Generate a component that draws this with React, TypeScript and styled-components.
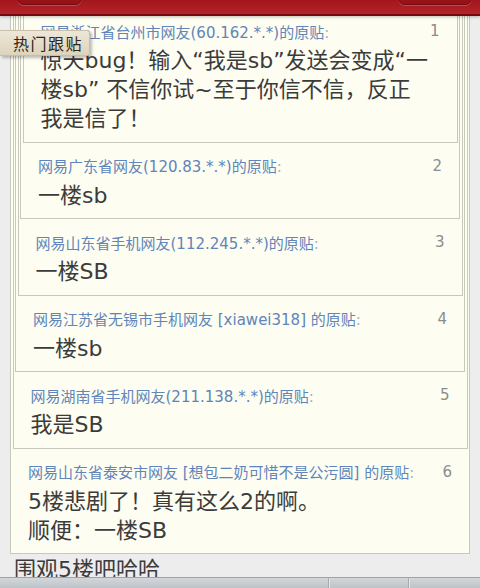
import React from "react";
import styled, { createGlobalStyle } from "styled-components";

const FONT = `"DejaVu Sans", "Noto Sans CJK SC", sans-serif`;

type Floor = { n: number; user: string; text: string };

const floors: Floor[] = [
  {
    n: 1,
    user: "网易浙江省台州市网友(60.162.*.*)",
    text: "惊天bug！输入“我是sb”发送会变成“一\n楼sb” 不信你试~至于你信不信，反正\n我是信了！",
  },
  { n: 2, user: "网易广东省网友(120.83.*.*)", text: "一楼sb" },
  { n: 3, user: "网易山东省手机网友(112.245.*.*)", text: "一楼SB" },
  { n: 4, user: "网易江苏省无锡市手机网友 [xiawei318] ", text: "一楼sb" },
  { n: 5, user: "网易湖南省手机网友(211.138.*.*)", text: "我是SB" },
  {
    n: 6,
    user: "网易山东省泰安市网友 [想包二奶可惜不是公污圆] ",
    text: "5楼悲剧了！真有这么2的啊。\n顺便：一楼SB",
  },
];

const GlobalStyle = createGlobalStyle`
  html, body {
    margin: 0;
    padding: 0;
    background: #ededed;
  }
  body {
    font-family: ${FONT};
  }
`;

const Screen = styled.div`
  width: 480px;
  height: 588px;
  display: flex;
  flex-direction: column;
  overflow: hidden;
  background: #ededed;
`;

const NavBar = styled.div`
  height: 16px;
  flex: none;
  display: flex;
  justify-content: space-between;
  align-items: flex-end;
  padding: 0 8px 9px 17px;
  box-sizing: border-box;
  overflow: hidden;
  background: linear-gradient(#a3161c, #b3232a);
  border-bottom: 2px solid #74090e;
  box-shadow: 0 1px 3px rgba(0, 0, 0, 0.25);
  position: relative;
  z-index: 2;
`;

const NavButton = styled.div<{ $w: number }>`
  width: ${({ $w }) => $w}px;
  height: 30px;
  flex: none;
  border-radius: 7px;
  border: 1px solid #720b10;
  background: linear-gradient(#a4151b, #961217);
  box-shadow: 0 1px 0 rgba(255, 255, 255, 0.22);
`;

const Scroll = styled.div`
  flex: 1;
  position: relative;
  overflow: hidden;
  padding: 0 10px;
`;

const Thread = styled.div`
  margin-top: -24px;
`;

const Box = styled.div<{ $nested: boolean }>`
  border: 1px solid #c8c8bc;
  background: #fdfdf1;
  margin: ${({ $nested }) => ($nested ? "2px 1.5px 0" : "0")};
`;

const Head = styled.div`
  height: 22px;
  margin-top: 12px;
  padding: 0 17px;
  display: flex;
  align-items: center;
  justify-content: space-between;
  font-size: 15px;
  white-space: nowrap;
`;

const User = styled.span`
  color: #5f85ba;
`;

const Colon = styled.span`
  color: #a8b4c4;
`;

const Num = styled.span`
  color: #8c8c8c;
  font-size: 15px;
`;

const Body = styled.div`
  margin-top: 4px;
  padding: 0 17px 8.5px;
  font-size: 22px;
  line-height: 29px;
  color: #3b3b3b;
  white-space: pre-line;
`;

const Comment = styled.div`
  margin-top: 2px;
  padding-left: 4px;
  font-size: 22px;
  line-height: 28px;
  color: #3b3b3b;
`;

const Tab = styled.div`
  position: absolute;
  top: 14px;
  left: 0;
  width: 90px;
  height: 26px;
  box-sizing: border-box;
  padding-left: 13px;
  display: flex;
  align-items: center;
  background: linear-gradient(#eee7d7, #ddd3bd);
  border: 1px solid #c9bfa8;
  border-left: none;
  border-radius: 0 3px 3px 0;
  box-shadow: 2px 2px 3px rgba(0, 0, 0, 0.25);
  font-family: "Noto Sans CJK SC", sans-serif;
  font-size: 16px;
  letter-spacing: 1.5px;
  color: #2b2520;
  z-index: 1;
`;

const ToolBar = styled.div`
  height: 10px;
  flex: none;
  display: flex;
  background: linear-gradient(#d3d7dc, #bec3c9);
  border-top: 1px solid #9ea3a9;
`;

const ToolCell = styled.div<{ $w?: number }>`
  width: ${({ $w }) => ($w ? `${$w}px` : "auto")};
  flex: ${({ $w }) => ($w ? "none" : "1")};
  & + & {
    border-left: 1px solid #a7acb2;
    box-shadow: inset 1px 0 0 #e4e7ea;
  }
`;

function FloorBox({ index }: { index: number }) {
  const floor = floors[index];
  const hasInner = index > 0;
  return (
    <Box $nested={index < floors.length - 1}>
      {hasInner && <FloorBox index={index - 1} />}
      <Head>
        <User>
          {floor.user}的原贴<Colon>:</Colon>
        </User>
        <Num>{floor.n}</Num>
      </Head>
      <Body>{floor.text}</Body>
    </Box>
  );
}

export default function App() {
  return (
    <>
      <GlobalStyle />
      <Screen>
        <NavBar>
          <NavButton $w={63} />
          <NavButton $w={72} />
        </NavBar>
        <Scroll>
          <Tab>热门跟贴</Tab>
          <Thread>
            <FloorBox index={floors.length - 1} />
            <Comment>围观5楼吧哈哈</Comment>
          </Thread>
        </Scroll>
        <ToolBar>
          <ToolCell $w={328} />
          <ToolCell $w={79} />
          <ToolCell />
        </ToolBar>
      </Screen>
    </>
  );
}
